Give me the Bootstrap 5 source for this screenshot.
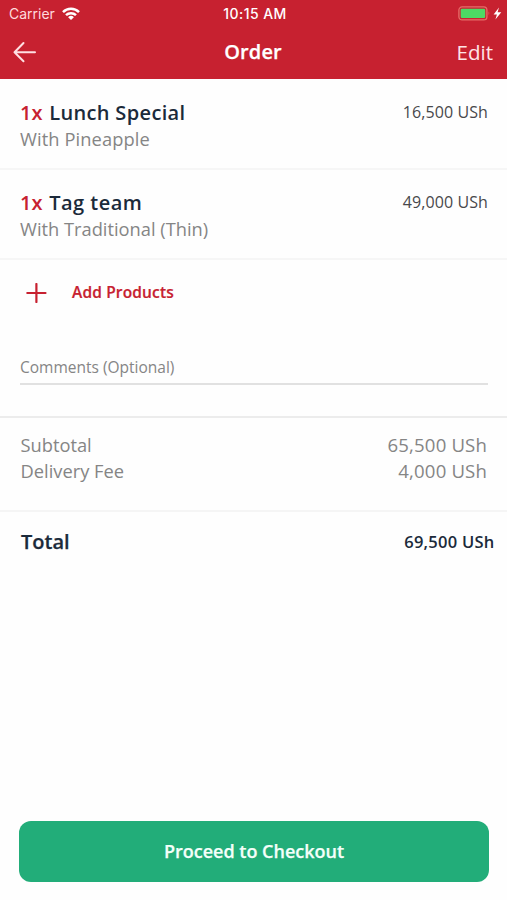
<!DOCTYPE html>
<html lang="en">
<head>
<meta charset="utf-8">
<meta name="viewport" content="width=device-width, initial-scale=1">
<title>Order</title>
<link href="https://cdn.jsdelivr.net/npm/bootstrap@5.3.0/dist/css/bootstrap.min.css" rel="stylesheet">
<style>
  body { font-family: "Open Sans", "Noto Sans", sans-serif; color: #1b2a3a; background: #fefefe; }
  .app { height: 900px; }
  .app-head { background: #c72130; height: 79px; }
  .status { height: 27px; padding: 0 5px 0 9px; font: 500 14px/27px Inter, sans-serif; }
  .side { flex: 1 1 0; }
  .carrier { font-weight: 400; font-size: 14px; color: #ffdadd; }
  .clock { letter-spacing: .45px; margin-right: 1px; }
  .wifi { margin-left: 7px; }
  .titlebar { height: 50px; padding: 0 14px 0 13px; line-height: 50px; }
  .title { font-size: 20px; font-weight: 600; letter-spacing: .1px; -webkit-text-stroke: .25px; }
  .edit { font-size: 20.5px; color: #ffe4e6; }
  .item { height: 90.5px; padding: 20px 19px 0 20px; border-bottom: 2px solid #f6f6f6; }
  .item + .item { padding-top: 19px; }
  .item-name { font-size: 20px; font-weight: 600; line-height: 27px; }
  .item-name .brand { margin-right: 1.5px; }
  .n1 { letter-spacing: .35px; }
  .n2 { letter-spacing: .5px; }
  .brand { color: #c72130; }
  .soft { color: #858585; font-size: 18.3px; line-height: 26px; }
  .sub { line-height: 25px; }
  .s1 { letter-spacing: .1px; }
  .price { color: #48484b; font-size: 16px; line-height: 26px; letter-spacing: .1px; }
  .add { height: 65px; padding-left: 26px; gap: 25px; font-size: 15.5px; font-weight: 600; }
  .a1 { letter-spacing: .15px; -webkit-text-stroke: .2px; }
  .comments { height: 60px; margin: 0 19px 31px 20px; padding-top: 30px; border-bottom: 2px solid #e1e1e1; font-size: 15.5px; line-height: 24px; color: #858585; }
  .sums { height: 96px; padding: 14px 20px 0 20.5px; border-top: 2px solid #ececec; border-bottom: 2px solid #f5f5f5; }
  .p1, .p2 { font-size: 18.6px; letter-spacing: .15px; }
  .total { height: 60px; padding: 0 12.5px 0 21px; }
  .total-label { font-size: 20px; font-weight: 600; -webkit-text-stroke: .25px; }
  .total-price { font-size: 16.5px; font-weight: 600; letter-spacing: .25px; }
  .checkout, .checkout:hover { height: 61px; margin: 0 18px 18px 19px; border: 0; border-radius: 12px; background: #22ad79; color: #f4fffa; font-size: 18px; font-weight: 600; -webkit-text-stroke: .25px; }
</style>
</head>
<body>
<main class="app d-flex flex-column">
  <header class="app-head text-white">
    <div class="status d-flex align-items-center">
      <div class="side d-flex align-items-center">
        <span class="carrier">Carrier</span>
        <svg class="wifi" width="18" height="13" viewBox="0 0 18 13" fill="none" stroke="#fff" stroke-width="2.5"><path d="M1 5.1a11.4 11.4 0 0 1 16 0M4 8.2a7.2 7.2 0 0 1 10 0"/><path d="M9 13 6.1 10.2a4.2 4.2 0 0 1 5.8 0z" fill="#fff" stroke="none"/></svg>
      </div>
      <span class="clock">10:15 AM</span>
      <div class="side d-flex align-items-center justify-content-end">
        <svg width="44" height="15" viewBox="0 0 44 15"><rect x=".9" y=".9" width="28" height="13" rx="3.2" fill="none" stroke="#e56d68" stroke-width="1.3"/><rect x="2.7" y="2.7" width="24.5" height="9.4" rx="1.3" fill="#4cd964"/><path d="M30.6 5.2q1.8 2.2 0 4.4z" fill="#e56d68"/><path d="M41 1.5 35.6 8.4h3.3L37.4 13.6l5.9-7.3h-3.7z" fill="#fff"/></svg>
      </div>
    </div>
    <div class="titlebar d-flex align-items-center">
      <div class="side d-flex">
        <svg width="24" height="22" viewBox="0 0 24 22" fill="none" stroke="#ffdfe2" stroke-width="2" stroke-linecap="round" stroke-linejoin="round"><path d="M22 11.3H1.5M10.5 2l-9 9.3 9 9"/></svg>
      </div>
      <span class="title">Order</span>
      <div class="side text-end edit">Edit</div>
    </div>
  </header>

  <section class="item d-flex justify-content-between">
    <div>
      <div class="item-name"><span class="brand">1x</span> <span class="n1">Lunch Special</span></div>
      <div class="soft sub s1">With Pineapple</div>
    </div>
    <div class="price">16,500 USh</div>
  </section>
  <section class="item d-flex justify-content-between">
    <div>
      <div class="item-name"><span class="brand">1x</span> <span class="n2">Tag team</span></div>
      <div class="soft sub">With Traditional (Thin)</div>
    </div>
    <div class="price">49,000 USh</div>
  </section>

  <div class="add brand d-flex align-items-center">
    <svg width="21" height="20" viewBox="0 0 21 20" stroke="#c72130" stroke-width="2.2" stroke-linecap="round"><path d="M1.3 10h18.2M10.4 1v18"/></svg>
    <span class="a1">Add Products</span>
  </div>
  <div class="comments">Comments (Optional)</div>

  <section class="sums">
    <div class="soft d-flex justify-content-between"><span>Subtotal</span><span class="p1">65,500 USh</span></div>
    <div class="soft d-flex justify-content-between"><span>Delivery Fee</span><span class="p2">4,000 USh</span></div>
  </section>
  <section class="total d-flex align-items-center justify-content-between">
    <span class="total-label">Total</span><span class="total-price">69,500 USh</span>
  </section>

  <button type="button" class="btn checkout mt-auto">Proceed to Checkout</button>
</main>
<script src="https://cdn.jsdelivr.net/npm/bootstrap@5.3.0/dist/js/bootstrap.bundle.min.js"></script>
</body>
</html>
